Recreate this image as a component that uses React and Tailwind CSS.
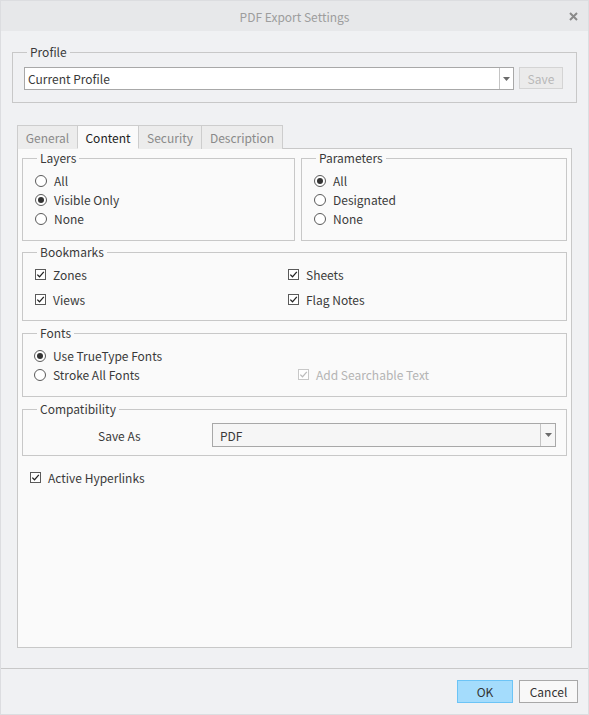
import React from 'react';

const Radio = ({ checked, label }) => (
  <div className="flex items-center h-[19px]">
    <span className="w-[12px] h-[12px] rounded-full border border-[#5a5a5a] bg-white flex items-center justify-center shrink-0">
      {checked && <span className="w-[6px] h-[6px] rounded-full bg-[#333]"></span>}
    </span>
    <span className="ml-[7px]">{label}</span>
  </div>
);

const Check = ({ checked, label, disabled }) => (
  <div className={`flex items-center h-[19px] ${disabled ? 'text-[#b4b4b4]' : ''}`}>
    <span className={`w-[11px] h-[11px] border bg-white flex items-center justify-center shrink-0 ${disabled ? 'border-[#c8c8c8]' : 'border-[#5a5a5a]'}`}>
      {checked && (
        <svg width="9" height="9" viewBox="0 0 9 9">
          <path d="M1.3 4.6 L3.5 6.8 L7.8 1.8" fill="none" stroke={disabled ? '#bcbcbc' : '#222'} strokeWidth="1.3" />
        </svg>
      )}
    </span>
    <span className="ml-[7px]">{label}</span>
  </div>
);

// legend text sits 18px in from the fieldset border
const Legend = ({ children, className = 'ml-[2px]' }) => (
  <legend className={`${className} px-[3px] leading-[18px]`}>{children}</legend>
);

const Arrow = () => (
  <svg width="7" height="4" viewBox="0 0 7 4">
    <path d="M0 0 L7 0 L3.5 4 Z" fill="#6b6b6b" />
  </svg>
);

const tabs = [
  { name: 'General', w: 'w-[61px]' },
  { name: 'Content', w: 'w-[62px]', active: true },
  { name: 'Security', w: 'w-[64px]' },
  { name: 'Description', w: 'w-[82px]' },
];

const App = () => {
  return (
    <div className="w-[589px] h-[715px] bg-[#f0f1f3] flex flex-col font-['Noto_Sans_CJK_KR','Noto_Sans',sans-serif] text-[12px] leading-[19px] text-[#3a3a3a] border border-[#dcdde0]">
      {/* Title bar */}
      <div className="h-[30px] shrink-0 bg-[#e7e8ea] relative flex items-center justify-center text-[#9d9d9d] text-[12px]">
        PDF Export Settings
        <svg className="absolute right-[10px] top-[11px]" width="9" height="9" viewBox="0 0 9 9">
          <path d="M1 1 L8 8 M8 1 L1 8" stroke="#8a8a8a" strokeWidth="2" />
        </svg>
      </div>

      {/* Profile */}
      <fieldset className="mx-[11px] mt-[12px] border border-[#c8c8c8] pl-[11px] pr-[13px] pt-[6px] pb-[12px]">
        <Legend className="ml-[3px]">Profile</Legend>
        <div className="flex">
          <div className="w-[490px] h-[23px] border border-[#a8a8a8] bg-white flex">
            <div className="flex-1 pl-[3px] flex items-center">Current Profile</div>
            <div className="w-[14px] border-l border-[#c4c4c4] flex items-center justify-center">
              <Arrow />
            </div>
          </div>
          <div className="ml-[5px] w-[44px] h-[22px] border border-[#d4d4d4] bg-[#ebebeb] text-[#b8b8b8] flex items-center justify-center">
            Save
          </div>
        </div>
      </fieldset>

      {/* Tabs */}
      <div className="ml-[16px] mt-[22px] flex h-[23px] relative z-10">
        {tabs.map((t, i) => (
          <div
            key={t.name}
            className={`${t.w} h-[24px] border border-[#cdcdcd] flex items-center justify-center ${i > 0 ? '-ml-px' : ''} ${
              t.active ? 'bg-[#fafafa] border-b-[#fafafa] text-[#222] z-10' : 'bg-[#ececec] text-[#8a8a8a] h-[23px] border-b-0'
            }`}
          >
            {t.name}
          </div>
        ))}
      </div>

      {/* Panel */}
      <div className="mx-[16px] h-[500px] shrink-0 border border-[#c8c8c8] bg-[#fafafa] px-[4px]">
        <div className="flex gap-[6px]">
          <fieldset className="w-[273px] border border-[#c8c8c8] pl-[12px] pt-[4px] pb-[12px]">
            <Legend>Layers</Legend>
            <Radio label="All" />
            <Radio label="Visible Only" checked />
            <Radio label="None" />
          </fieldset>
          <fieldset className="flex-1 border border-[#c8c8c8] pl-[12px] pt-[4px] pb-[12px]">
            <Legend>Parameters</Legend>
            <Radio label="All" checked />
            <Radio label="Designated" />
            <Radio label="None" />
          </fieldset>
        </div>

        <fieldset className="mt-[2px] border border-[#c8c8c8] pl-[12px] pt-[4px] pb-[11px]">
          <Legend>Bookmarks</Legend>
          <div className="grid grid-cols-[253px_1fr] gap-y-[6px]">
            <Check label="Zones" checked />
            <Check label="Sheets" checked />
            <Check label="Views" checked />
            <Check label="Flag Notes" checked />
          </div>
        </fieldset>

        <fieldset className="mt-[3px] border border-[#c8c8c8] pl-[11px] pt-[4px] pb-[12px]">
          <Legend className="ml-[3px]">Fonts</Legend>
          <Radio label="Use TrueType Fonts" checked />
          <div className="flex">
            <div className="w-[264px]">
              <Radio label="Stroke All Fonts" />
            </div>
            <Check label="Add Searchable Text" checked disabled />
          </div>
        </fieldset>

        <fieldset className="mt-[3px] border border-[#c8c8c8] pr-[10px] pt-[5px] pb-[8px]">
          <Legend className="ml-[14px]">Compatibility</Legend>
          <div className="flex items-center">
            <div className="w-[189px] pl-[75px]">Save As</div>
            <div className="flex-1 h-[24px] border border-[#a8a8a8] bg-[#f6f6f6] flex">
              <div className="flex-1 pl-[7px] flex items-center">PDF</div>
              <div className="w-[15px] border-l border-[#c4c4c4] flex items-center justify-center">
                <Arrow />
              </div>
            </div>
          </div>
        </fieldset>

        <div className="mt-[12px] ml-[8px]">
          <Check label="Active Hyperlinks" checked />
        </div>
      </div>

      <div className="flex-1"></div>

      {/* Footer */}
      <div className="h-[46px] shrink-0 border-t border-[#c8c8c8] flex justify-end items-start pt-[11px] pr-[10px] gap-[6px]">
        <div className="w-[56px] h-[23px] bg-[#a4dcfc] border border-[#6cc4f6] flex items-center justify-center text-[#333]">
          OK
        </div>
        <div className="w-[59px] h-[23px] bg-[#f8f8f8] border border-[#a8a8a8] flex items-center justify-center text-[#333]">
          Cancel
        </div>
      </div>
    </div>
  );
};

export default App;
